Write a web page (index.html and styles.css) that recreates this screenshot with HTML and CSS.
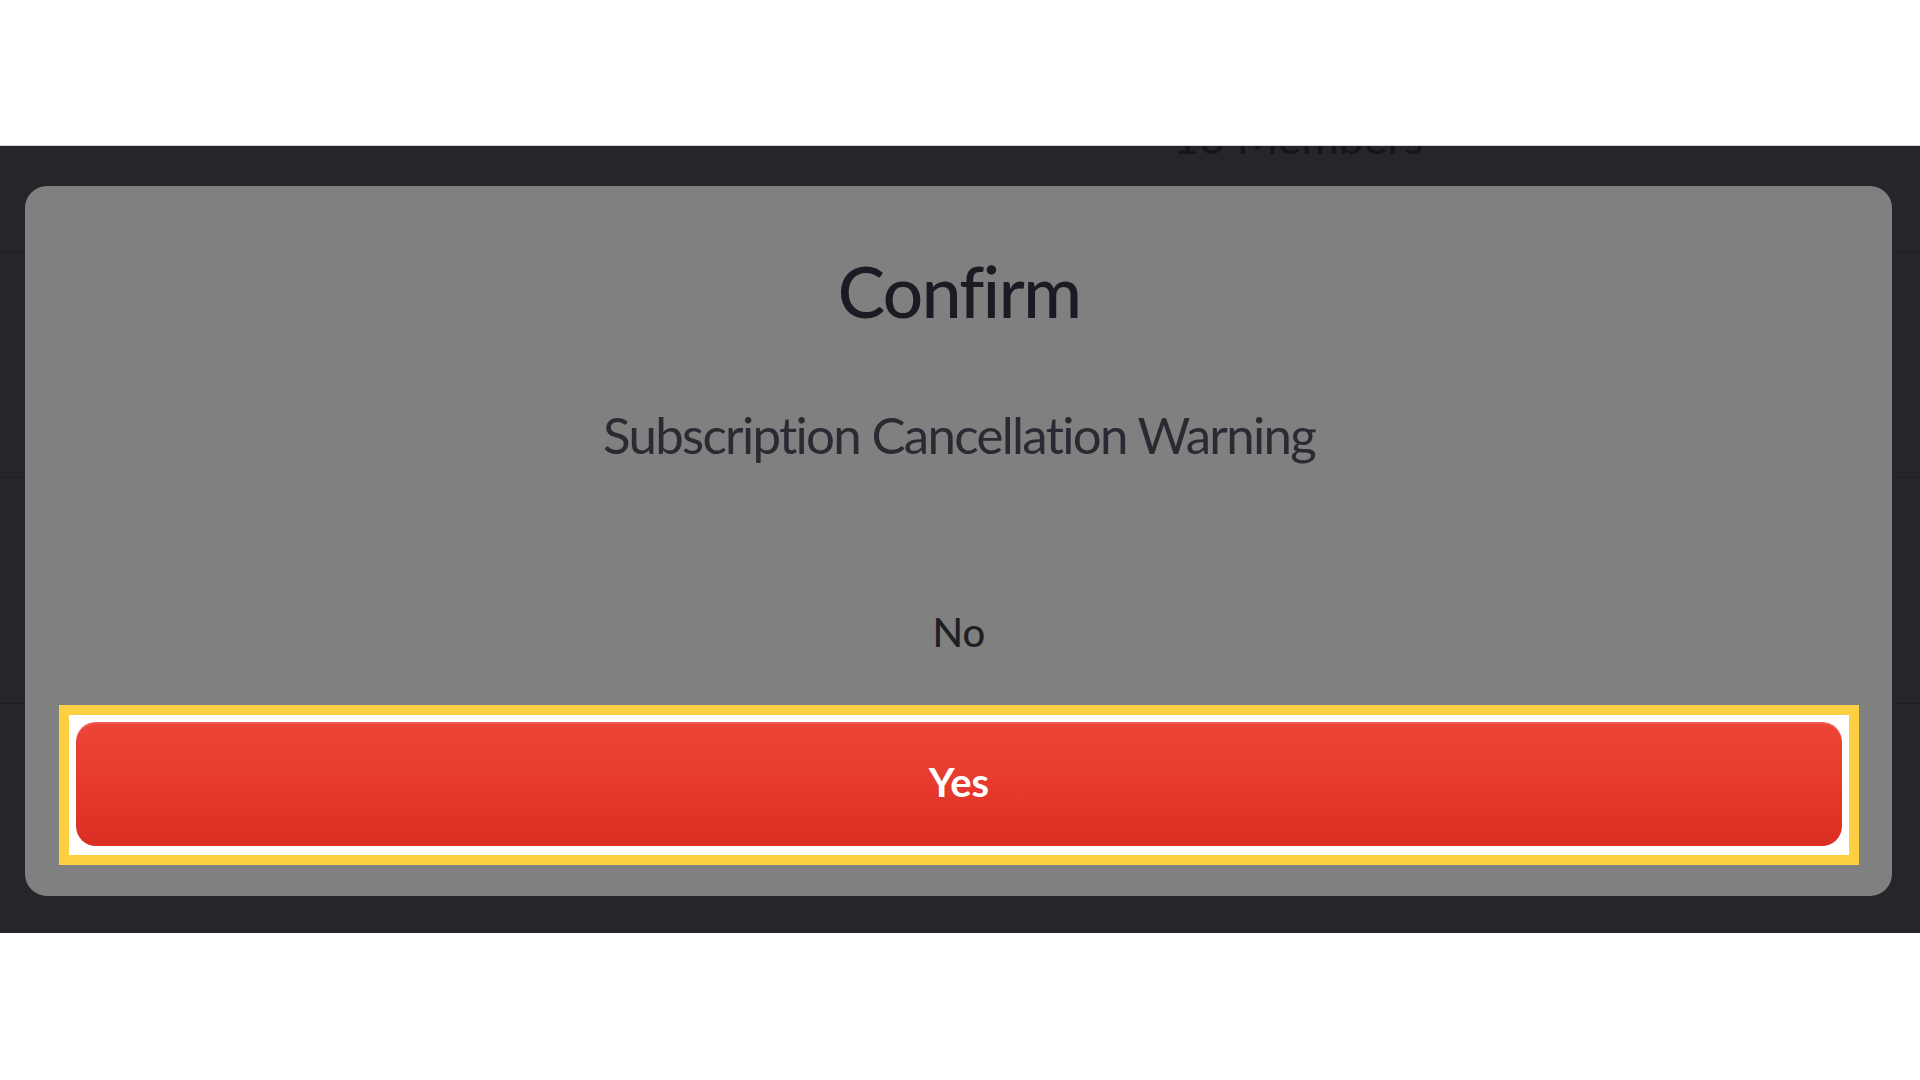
FILE: index.html
```html
<!DOCTYPE html>
<html lang="en">
<head>
<meta charset="utf-8">
<title>Confirm</title>
<link rel="stylesheet" href="styles.css">
</head>
<body>
<div class="top-space"></div>
<section class="stage">
  <div class="list">
    <div class="row row-first">
      <span class="members">10 Members</span>
    </div>
    <div class="row"></div>
    <div class="row"></div>
    <div class="row row-last"></div>
  </div>
  <div class="modal">
    <h1 class="title">Confirm</h1>
    <p class="subtitle">Subscription Cancellation Warning</p>
    <div class="no">No</div>
    <div class="highlight">
      <button class="yes">Yes</button>
    </div>
  </div>
</section>
<div class="bottom-space"></div>
</body>
</html>
```
FILE: styles.css
```css
html, body {
  margin: 0;
  padding: 0;
  background: #ffffff;
  font-family: "Lato", "Open Sans", sans-serif;
}

.top-space {
  height: 145px;
  background: #ffffff;
}

.stage {
  position: relative;
  height: 788px;
  background: #25262a;
  border-top: 1px solid #d6d6d6;
  box-sizing: border-box;
  overflow: hidden;
}

.list {
  display: flex;
  flex-direction: column;
}

.row {
  height: 226px;
  border-bottom: 1px solid #1e1f23;
  box-sizing: border-box;
}

.row-first {
  height: 106px;
  display: flex;
  padding-left: 1173px;
}

.members {
  margin-top: -31px;
  font-size: 45px;
  line-height: 1;
  color: #141519;
  white-space: nowrap;
  height: 45px;
}

.modal {
  position: absolute;
  left: 25px;
  right: 28px;
  top: 40px;
  background: #808080;
  border-radius: 22px;
  padding: 69px 33px 31px 34px;
  display: flex;
  flex-direction: column;
  align-items: center;
}

.title {
  margin: 0;
  font-size: 71px;
  line-height: 1;
  font-weight: 500;
  color: #1b1c23;
  letter-spacing: -1.5px;
}

.subtitle {
  margin: 83px 0 0;
  font-size: 51px;
  line-height: 1;
  font-weight: 400;
  color: #2a2b32;
  letter-spacing: -1.7px;
}

.no {
  margin-top: 152px;
  font-size: 40px;
  line-height: 1;
  font-weight: 500;
  color: #1e1f24;
}

.highlight {
  margin-top: 53px;
  align-self: stretch;
  border: 10px solid #fdcf43;
  background: #ffffff;
  padding: 7px 7px 9px 7px;
}

.yes {
  display: flex;
  align-items: center;
  justify-content: center;
  width: 100%;
  height: 124px;
  border: none;
  border-radius: 20px;
  background: linear-gradient(to bottom, #ed4538 0%, #e63a2e 50%, #dc2e22 100%);
  box-shadow: inset 0 2px 0 rgba(255, 255, 255, 0.12);
  color: #ffffff;
  font-family: "Lato", "Open Sans", sans-serif;
  font-size: 40px;
  font-weight: 700;
  line-height: 1;
  padding: 0 0 4px;
}

.bottom-space {
  height: 147px;
  background: #ffffff;
}
```
